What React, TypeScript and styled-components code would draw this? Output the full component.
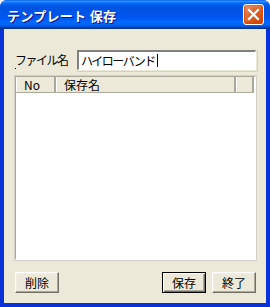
import { FC } from "react";
import styled, { createGlobalStyle, css } from "styled-components";

const GlobalStyle = createGlobalStyle`
  html, body {
    margin: 0;
    padding: 0;
    background: #ffffff;
  }
  * {
    box-sizing: border-box;
  }
`;

const uiFont = `"Noto Sans CJK JP", "Liberation Sans", sans-serif`;

const Window = styled.div`
  width: 270px;
  height: 307px;
  display: flex;
  flex-direction: column;
  border-radius: 7px 7px 0 0;
  overflow: hidden;
  background: #0831d9;
  font-family: ${uiFont};
`;

const TitleBar = styled.div`
  height: 29px;
  flex-shrink: 0;
  display: flex;
  align-items: center;
  justify-content: space-between;
  padding: 0 6px 0 7px;
  background: linear-gradient(
    to bottom,
    #0058ee 0%,
    #3593ff 4%,
    #288eff 6%,
    #127dff 8%,
    #036ffc 10%,
    #0262ee 14%,
    #0057e5 20%,
    #0054e3 24%,
    #0055eb 56%,
    #005bf5 66%,
    #026afe 76%,
    #0062ef 86%,
    #0052d6 92%,
    #0040ab 94%,
    #003092 100%
  );
`;

const Title = styled.span`
  color: #ffffff;
  font-size: 13px;
  font-weight: bold;
  letter-spacing: 0.3px;
  text-shadow: 1px 1px #0f1089;
  margin-top: 1px;
`;

const CloseButton = styled.div`
  width: 21px;
  height: 21px;
  border: 1px solid #ffffff;
  border-radius: 3px;
  display: flex;
  align-items: center;
  justify-content: center;
  background: radial-gradient(
    circle at 90% 90%,
    #cc4600 0%,
    #dc6527 55%,
    #e9a385 100%
  );
  box-shadow: inset 0 -1px 2px 1px #da4600;
`;

const Frame = styled.div`
  flex: 1;
  display: flex;
  flex-direction: column;
  margin: 0 4px 4px 4px;
  background: #ece9d8;
  padding: 21px 10px 0 11px;
`;

const NameRow = styled.div`
  display: flex;
  align-items: center;
  height: 20px;
  position: relative;
`;

const Label = styled.span`
  font-size: 12px;
  letter-spacing: -1.5px;
  color: #000000;
  width: 62px;
  flex-shrink: 0;
  line-height: 1;
  white-space: nowrap;
`;

const FocusDot = styled.span`
  position: absolute;
  left: 0;
  top: 18px;
  width: 1px;
  height: 1px;
  background: #000000;
`;

const TextBox = styled.div`
  flex: 1;
  height: 20px;
  background: #ffffff;
  border-style: solid;
  border-width: 2px 1px 1px 2px;
  border-color: #808080 #ffffff #ffffff #808080;
  box-shadow: 0 0 0 1px #ece9d8, 1px 1px 0 1px #d4d0c8;
  display: flex;
  align-items: center;
  padding-left: 2px;
  font-size: 12px;
  letter-spacing: -1.5px;
  color: #000000;
`;

const Caret = styled.span`
  display: inline-block;
  width: 1px;
  height: 13px;
  background: #000000;
  margin-left: 2px;
`;

const ListView = styled.div`
  margin-top: 6px;
  height: 184px;
  display: flex;
  flex-direction: column;
  background: #ffffff;
  border-style: solid;
  border-width: 1px 2px 2px 1px;
  border-color: #aca899 #ffffff #ffffff #aca899;
  box-shadow: 0 0 0 1px #d4d0c8;
`;

const Header = styled.div`
  height: 16px;
  display: flex;
  background: #ece9d8;
  border-bottom: 1px solid #aca899;
`;

const HeaderCell = styled.div<{ $width?: number }>`
  ${({ $width }) =>
    $width
      ? css`
          width: ${$width}px;
        `
      : css`
          flex: 1;
        `}
  height: 100%;
  display: flex;
  align-items: center;
  padding-left: 7px;
  font-size: 12px;
  color: #000000;
  border-left: 1px solid #ffffff;
  border-right: 2px solid #aca899;
  line-height: 1;
`;

const ListBody = styled.div`
  flex: 1;
`;

const Footer = styled.div`
  margin-top: 12px;
  display: flex;
  align-items: center;
  gap: 6px;
`;

const Spacer = styled.div`
  flex: 1;
`;

const Button = styled.button<{ $default?: boolean }>`
  width: 44px;
  height: 21px;
  padding: 0;
  margin: 0;
  font-family: ${uiFont};
  font-size: 12px;
  color: #000000;
  background: #ece9d8;
  border-style: solid;
  border-width: 1px;
  border-color: #ffffff #716f64 #716f64 #ffffff;
  box-shadow: inset -1px -1px 0 #aca899, inset 1px 1px 0 #f1efe2;
  line-height: 1;
  ${({ $default }) =>
    $default &&
    css`
      border-color: #000000;
      box-shadow: inset 1px 1px 0 #ffffff, inset -1px -1px 0 #716f64,
        inset -2px -2px 0 #aca899;
    `}
`;

const CloseIcon: FC = () => (
  <svg width="13" height="13" viewBox="0 0 13 13">
    <path
      d="M2 2 L11 11 M11 2 L2 11"
      stroke="#ffffff"
      strokeWidth="2.2"
      strokeLinecap="square"
    />
  </svg>
);

const App: FC = () => {
  return (
    <>
      <GlobalStyle />
      <Window>
        <TitleBar>
          <Title>テンプレート 保存</Title>
          <CloseButton>
            <CloseIcon />
          </CloseButton>
        </TitleBar>
        <Frame>
          <NameRow>
            <Label>ファイル名</Label>
            <FocusDot />
            <TextBox>
              ハイローバンド
              <Caret />
            </TextBox>
          </NameRow>
          <ListView>
            <Header>
              <HeaderCell $width={40}>No</HeaderCell>
              <HeaderCell>保存名</HeaderCell>
              <HeaderCell $width={18} />
            </Header>
            <ListBody />
          </ListView>
          <Footer>
            <Button>削除</Button>
            <Spacer />
            <Button $default>保存</Button>
            <Button>終了</Button>
          </Footer>
        </Frame>
      </Window>
    </>
  );
};

export default App;
